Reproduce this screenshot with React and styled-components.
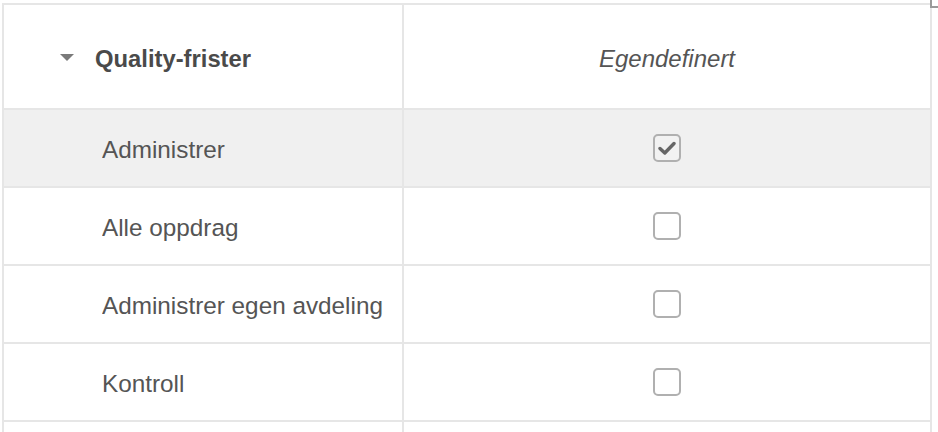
import React, { useState } from "react";
import styled, { createGlobalStyle } from "styled-components";

const GlobalStyle = createGlobalStyle`
  html, body {
    margin: 0;
    padding: 0;
    background: #fff;
    font-family: "Liberation Sans", Arial, sans-serif;
    overflow: hidden;
  }
`;

const rows = [
  { id: 1, label: "Administrer", checked: true, active: true },
  { id: 2, label: "Alle oppdrag", checked: false },
  { id: 3, label: "Administrer egen avdeling", checked: false },
  { id: 4, label: "Kontroll", checked: false },
  { id: 5, label: "", checked: false, hideBox: true },
];

function Checkbox({ checked, onToggle }) {
  return (
    <Box $checked={checked} onClick={onToggle}>
      {checked && (
        <svg width="18" height="14" viewBox="0 0 18 14">
          <path d="M2 7.5 L6.8 12 L16 2.5" fill="none" stroke="#666" strokeWidth="3.4" strokeLinecap="round" strokeLinejoin="round" />
        </svg>
      )}
    </Box>
  );
}

function App() {
  const [items, setItems] = useState(rows);

  const toggle = (id) =>
    setItems(items.map((r) => (r.id === id ? { ...r, checked: !r.checked } : r)));

  return (
    <Page>
      <GlobalStyle />
      <Corner />
      <Table>
        <Row>
          <NameCell $head>
            <Caret />
            <GroupTitle>Quality-frister</GroupTitle>
          </NameCell>
          <ValueCell>
            <ColumnTitle>Egendefinert</ColumnTitle>
          </ValueCell>
        </Row>
        {items.map((r) => (
          <Row key={r.id} $active={r.active}>
            <NameCell>
              <Label title={r.label}>{r.label}</Label>
            </NameCell>
            <ValueCell>
              {!r.hideBox && <Checkbox checked={r.checked} onToggle={() => toggle(r.id)} />}
            </ValueCell>
          </Row>
        ))}
      </Table>
    </Page>
  );
}

export default App;

const Page = styled.div`
  position: relative;
  padding: 3px 0 0 2px;
  height: 432px;
  box-sizing: border-box;
`;

const Corner = styled.span`
  position: absolute;
  top: 0;
  left: 930px;
  width: 7px;
  height: 6px;
  border-left: 2px solid #9a9a9a;
  border-bottom: 2px solid #9a9a9a;
`;

const Table = styled.div`
  width: 930px;
  border-top: 2px solid #e6e6e6;
  border-left: 2px solid #e6e6e6;
  box-sizing: border-box;
`;

const Row = styled.div`
  display: grid;
  grid-template-columns: 400px 528px;
  background: ${(p) => (p.$active ? "#f0f0f0" : "#fff")};
`;

const Cell = styled.div`
  display: flex;
  align-items: center;
  box-sizing: border-box;
  border-right: 2px solid #e6e6e6;
  border-bottom: 2px solid #e6e6e6;
  min-width: 0;
`;

const NameCell = styled(Cell)`
  height: ${(p) => (p.$head ? "105px" : "78px")};
  padding: ${(p) => (p.$head ? "0 0 0 56px" : "0 19px 0 98px")};
`;

const ValueCell = styled(Cell)`
  justify-content: center;
`;

const Caret = styled.span`
  width: 0;
  height: 0;
  border-left: 7px solid transparent;
  border-right: 7px solid transparent;
  border-top: 7px solid #7a7a7a;
  margin-right: 21px;
  margin-top: 2px;
`;

const GroupTitle = styled.span`
  font-size: 23.8px;
  font-weight: bold;
  color: #4a4a4a;
  margin-top: 4px;
`;

const ColumnTitle = styled.span`
  font-size: 24px;
  font-style: italic;
  color: #555;
  margin-top: 4px;
`;

const Label = styled.span`
  font-size: 24.3px;
  color: #555;
  white-space: nowrap;
  overflow: hidden;
  text-overflow: ellipsis;
  margin-top: 4px;
`;

const Box = styled.span`
  width: 28px;
  height: 28px;
  box-sizing: border-box;
  border: 2px solid #b0b0b0;
  border-radius: 5px;
  background: ${(p) => (p.$checked ? "#f2f2f2" : "#fff")};
  display: flex;
  align-items: center;
  justify-content: center;
  cursor: pointer;
`;
